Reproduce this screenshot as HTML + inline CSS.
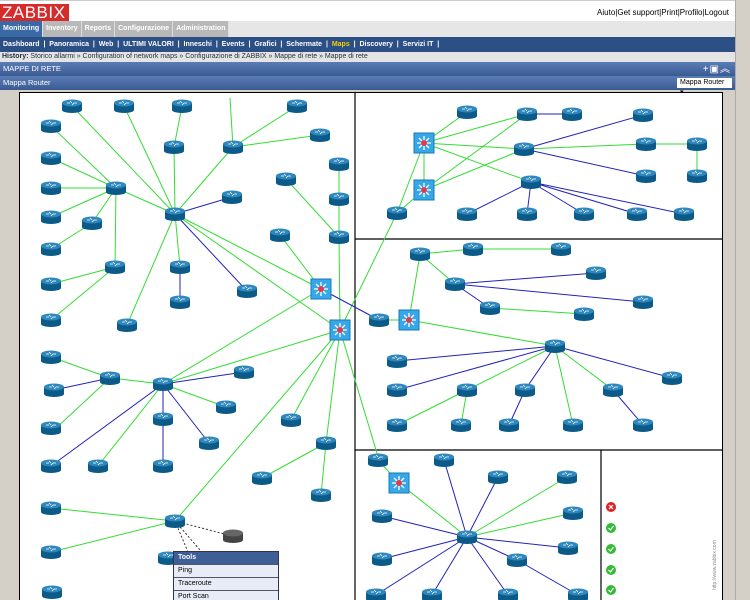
<!DOCTYPE html>
<html><head><meta charset="utf-8"><style>
*{margin:0;padding:0;box-sizing:border-box}
html,body{width:750px;height:600px;overflow:hidden}
body{background:#d4d0c8;font-family:"Liberation Sans",sans-serif;font-size:8px;position:relative}
.top{position:absolute;left:0;top:0;width:735px;height:21px;background:#fff;border-top:1px solid #ccc}
.logo{position:absolute;left:0;top:3px;width:69px;height:18px;background:#d52b2b;color:#fff;font-size:17px;line-height:18px;padding-left:2px;letter-spacing:0.5px}
.links{position:absolute;right:6px;top:7px;font-size:8px;color:#000}
.tabs{position:absolute;left:0;top:21px;width:735px;height:16px;background:#e6e6e6}
.tabs span{float:left;height:16px;line-height:16px;padding:0 3px;font-weight:bold;color:#fff;font-size:7px;background:#b8b8b8;border-right:1px solid #ddd}
.tabs span.sel{background:#3a6aa6}
.sub{position:absolute;left:0;top:37px;width:735px;height:15px;background:#2c4f86;color:#fff;font-weight:bold;font-size:7px;line-height:15px;padding-left:3px;white-space:nowrap}
.sub b{color:#f4d000}
.hist{position:absolute;left:0;top:52px;width:735px;height:10px;background:#e4e4e4;font-size:7px;line-height:10px;color:#234;padding-left:2px;white-space:nowrap}
.bar{position:absolute;left:0;width:735px;height:14px;background:linear-gradient(#5a7cb4,#3a5a92);color:#fff;font-size:7.5px;line-height:14px;padding-left:3px}
.sel2{position:absolute;right:3px;top:2px;background:#fff;color:#000;font-size:7px;height:10px;line-height:10px;padding:0 3px;width:55px}
.scroll{position:absolute;left:735px;top:0;width:15px;height:600px;background:#d4d0c8;border-left:1px solid #aaa}
.map{position:absolute;left:19px;top:92px;width:704px;height:508px;background:#fff;border:1px solid #000;border-bottom:none}
.menu{position:absolute;left:173px;top:551px;width:106px;height:49px;overflow:hidden;font-size:7px;border:1px solid #334;border-bottom:none}
.menu div{height:13px;line-height:12px;padding-left:4px;background:#e8ecf6;border-bottom:1px solid #556}
.menu div.h{background:#3e5e98;color:#fff;font-weight:bold}
</style></head><body>
<div class="top"><div class="logo">ZABBIX</div><div class="links">Aiuto|Get support|Print|Profilo|Logout</div></div>
<div class="tabs"><span class="sel">Monitoring</span><span>Inventory</span><span>Reports</span><span>Configurazione</span><span>Administration</span></div>
<div class="sub">Dashboard &nbsp;|&nbsp; Panoramica &nbsp;|&nbsp; Web &nbsp;|&nbsp; ULTIMI VALORI &nbsp;|&nbsp; Inneschi &nbsp;|&nbsp; Events &nbsp;|&nbsp; Grafici &nbsp;|&nbsp; Schermate &nbsp;|&nbsp; <b>Maps</b> &nbsp;|&nbsp; Discovery &nbsp;|&nbsp; Servizi IT &nbsp;|</div>
<div class="hist"><b>History:</b> Storico allarmi » Configuration of network maps » Configurazione di ZABBIX » Mappe di rete » Mappe di rete</div>
<div class="bar" style="top:62px">MAPPE DI RETE<span style="position:absolute;right:4px;top:1px;font-size:10px;letter-spacing:1px">+▣︽</span></div>
<div class="bar" style="top:76px">Mappa Router<div class="sel2">Mappa Router ▾</div></div>
<div class="scroll"></div>
<div class="map"></div>
<svg width="750" height="600" style="position:absolute;left:0;top:0">
<defs>
<g id="r"><rect x="-10" y="-3" width="20" height="7" fill="#0c5a88"/><ellipse cy="4" rx="10" ry="3" fill="#0c5a88"/><ellipse cy="-3" rx="10" ry="3.5" fill="#2e88bd"/><path d="M-5 -3h3M2 -3h3M-2 -5l2 2M0 -1l2 -2" stroke="#fff" stroke-width="0.8"/></g>
<g id="s"><rect x="-10" y="-10" width="20" height="20" fill="#36a8e8" stroke="#1a78b8"/><path d="M0 -7v14M-7 0h14M-5 -5l10 10M5 -5l-10 10" stroke="#fff" stroke-width="1.3"/><circle r="3" fill="#e23b4b"/></g>
</defs>
<g stroke="#000" stroke-width="1.2"><line x1="355" y1="92" x2="355" y2="600"/><line x1="355" y1="239" x2="722" y2="239"/><line x1="355" y1="450" x2="722" y2="450"/><line x1="601" y1="450" x2="601" y2="600"/></g>
<g stroke="#33dd33" stroke-width="1" fill="none">
<path d="M72 106L175 214M124 106L175 214M182 106L174 147L175 214M233 147L175 214M230 98L233 147M297 106L233 147M320 135L233 147M51 126L116 188M51 158L116 188M51 188L116 188M51 217L116 188M92 223L116 188M51 249L92 223M116 188L115 267M116 188L175 214M51 284L115 267M51 320L115 267M127 325L175 214M175 214L180 267M175 214L321 289M175 214L340 330M286 179L339 237M339 164L339 237L340 330M280 235L321 289M321 289L163 384M340 330L163 384M340 330L175 521M340 330L291 420M340 330L326 443M340 330L397 213M340 330L379 460"/>
<path d="M51 357L110 378L163 384M110 378L54 430M163 384L226 407M163 384L98 466M326 443L321 495M326 443L262 478M51 508L175 521M51 552L175 521"/>
<path d="M424 143L467 112M424 143L527 114M424 143L524 149M424 143L531 182M424 143L424 190M424 190L527 114M424 190L524 149M424 190L397 213M424 143L397 213M524 149L646 144L697 144L697 176"/>
<path d="M420 254L473 249L561 249M420 254L455 284M420 254L409 320M379 320L409 320M409 320L555 346M490 308L584 314M555 346L467 390M555 346L573 425M555 346L613 390M467 390L397 425M467 390L461 425"/>
<path d="M467 537L567 477M467 537L573 513M467 537L399 483L378 460"/>
</g>
<g stroke="#2222bb" stroke-width="1" fill="none">
<path d="M175 214L232 197M175 214L247 291M180 267L180 302M321 289L379 320M110 378L54 390M163 384L244 372M163 384L51 466M163 384L163 419L163 466M163 384L209 443"/>
<path d="M527 114L572 114M524 149L643 115M524 149L646 176M531 182L467 214M531 182L527 214M531 182L584 214M531 182L637 214M531 182L684 214"/>
<path d="M455 284L596 273M455 284L643 302M455 284L490 308M555 346L397 361M555 346L397 390M555 346L525 390M555 346L672 378M525 390L509 425M613 390L643 425"/>
<path d="M467 537L444 460M467 537L498 477M467 537L382 516M467 537L568 548M467 537L382 559M467 537L517 560M467 537L376 595M467 537L432 595M467 537L508 595M517 560L578 595"/>
</g>
<path d="M175 521L232 536M175 521L200 550M175 521L188 552" stroke="#333" stroke-dasharray="2 2" fill="none"/>
<g fill="#444"><rect x="223" y="533" width="20" height="7"/><ellipse cx="233" cy="540" rx="10" ry="3"/><ellipse cx="233" cy="533" rx="10" ry="3.5" fill="#666"/></g>
<g>
<use href="#r" x="72" y="106"/><use href="#r" x="124" y="106"/><use href="#r" x="182" y="106"/><use href="#r" x="297" y="106"/>
<use href="#r" x="51" y="126"/><use href="#r" x="51" y="158"/><use href="#r" x="51" y="188"/><use href="#r" x="51" y="217"/><use href="#r" x="51" y="249"/><use href="#r" x="51" y="284"/><use href="#r" x="51" y="320"/>
<use href="#r" x="116" y="188"/><use href="#r" x="92" y="223"/><use href="#r" x="115" y="267"/><use href="#r" x="174" y="147"/><use href="#r" x="233" y="147"/><use href="#r" x="320" y="135"/><use href="#r" x="232" y="197"/><use href="#r" x="286" y="179"/><use href="#r" x="339" y="164"/><use href="#r" x="339" y="199"/><use href="#r" x="339" y="237"/><use href="#r" x="280" y="235"/><use href="#r" x="180" y="267"/><use href="#r" x="180" y="302"/><use href="#r" x="247" y="291"/><use href="#r" x="127" y="325"/><use href="#r" x="175" y="214"/>
<use href="#r" x="51" y="357"/><use href="#r" x="110" y="378"/><use href="#r" x="54" y="390"/><use href="#r" x="163" y="384"/><use href="#r" x="244" y="372"/><use href="#r" x="226" y="407"/><use href="#r" x="51" y="428"/><use href="#r" x="163" y="419"/><use href="#r" x="209" y="443"/><use href="#r" x="291" y="420"/><use href="#r" x="326" y="443"/><use href="#r" x="51" y="466"/><use href="#r" x="98" y="466"/><use href="#r" x="163" y="466"/><use href="#r" x="262" y="478"/><use href="#r" x="321" y="495"/><use href="#r" x="51" y="508"/><use href="#r" x="175" y="521"/><use href="#r" x="51" y="552"/><use href="#r" x="168" y="558"/><use href="#r" x="52" y="592"/>
<use href="#r" x="467" y="112"/><use href="#r" x="527" y="114"/><use href="#r" x="572" y="114"/><use href="#r" x="643" y="115"/><use href="#r" x="524" y="149"/><use href="#r" x="646" y="144"/><use href="#r" x="697" y="144"/><use href="#r" x="646" y="176"/><use href="#r" x="697" y="176"/><use href="#r" x="531" y="182"/><use href="#r" x="397" y="213"/><use href="#r" x="467" y="214"/><use href="#r" x="527" y="214"/><use href="#r" x="584" y="214"/><use href="#r" x="637" y="214"/><use href="#r" x="684" y="214"/>
<use href="#r" x="420" y="254"/><use href="#r" x="473" y="249"/><use href="#r" x="561" y="249"/><use href="#r" x="596" y="273"/><use href="#r" x="455" y="284"/><use href="#r" x="490" y="308"/><use href="#r" x="584" y="314"/><use href="#r" x="643" y="302"/><use href="#r" x="379" y="320"/><use href="#r" x="555" y="346"/><use href="#r" x="397" y="361"/><use href="#r" x="672" y="378"/><use href="#r" x="397" y="390"/><use href="#r" x="467" y="390"/><use href="#r" x="525" y="390"/><use href="#r" x="613" y="390"/><use href="#r" x="397" y="425"/><use href="#r" x="461" y="425"/><use href="#r" x="509" y="425"/><use href="#r" x="573" y="425"/><use href="#r" x="643" y="425"/>
<use href="#r" x="378" y="460"/><use href="#r" x="444" y="460"/><use href="#r" x="498" y="477"/><use href="#r" x="567" y="477"/><use href="#r" x="382" y="516"/><use href="#r" x="573" y="513"/><use href="#r" x="467" y="537"/><use href="#r" x="382" y="559"/><use href="#r" x="568" y="548"/><use href="#r" x="517" y="560"/><use href="#r" x="376" y="595"/><use href="#r" x="432" y="595"/><use href="#r" x="508" y="595"/><use href="#r" x="578" y="595"/>
<use href="#s" x="321" y="289"/><use href="#s" x="340" y="330"/><use href="#s" x="424" y="143"/><use href="#s" x="424" y="190"/><use href="#s" x="409" y="320"/><use href="#s" x="399" y="483"/>
</g>
<g><circle cx="611" cy="507" r="5" fill="#d22"/><path d="M609 505l4 4M613 505l-4 4" stroke="#fff" stroke-width="1.2"/>
<circle cx="611" cy="528" r="5" fill="#3b3"/><circle cx="611" cy="549" r="5" fill="#3b3"/><circle cx="611" cy="570" r="5" fill="#3b3"/><circle cx="611" cy="590" r="5" fill="#3b3"/>
<path d="M608.5 528l2 2 3-4M608.5 549l2 2 3-4M608.5 570l2 2 3-4M608.5 590l2 2 3-4" stroke="#fff" stroke-width="1.2" fill="none"/></g>
<text x="716" y="590" font-size="5" fill="#888" transform="rotate(-90 716 590)">http://www.zabbix.com</text>
</svg>
<div class="menu"><div class="h">Tools</div><div>Ping</div><div>Traceroute</div><div>Port Scan</div></div>
</body></html>
